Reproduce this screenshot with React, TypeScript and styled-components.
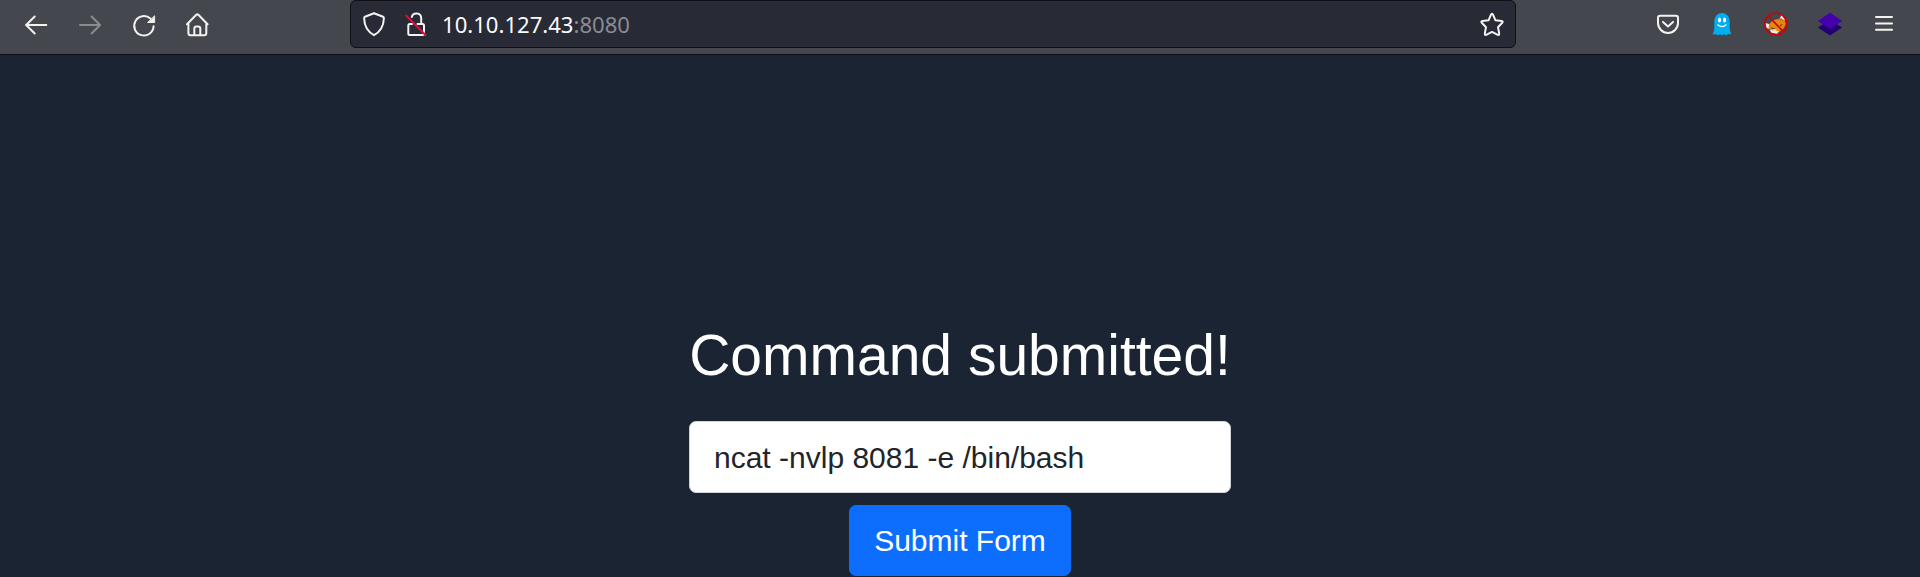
import React from "react";
import styled, { createGlobalStyle } from "styled-components";

const GlobalStyle = createGlobalStyle`
  * { box-sizing: border-box; }
  html, body { margin: 0; padding: 0; background: #1b2432; }
  body { overflow: hidden; }
`;

const Window = styled.div`
  width: 100%;
  height: 577px;
  display: flex;
  flex-direction: column;
  overflow: hidden;
  background: #1b2432;
  font-family: "Liberation Sans", Arial, sans-serif;
`;

const Toolbar = styled.header`
  flex: none;
  height: 55px;
  display: flex;
  align-items: flex-start;
  justify-content: space-between;
  padding: 0 9px 0 9px;
  background: #45474e;
  border-bottom: 1px solid #0d0e13;
`;

const ButtonGroup = styled.nav`
  display: flex;
`;

const ToolButton = styled.button<{ $dim?: boolean }>`
  width: 54px;
  height: 50px;
  padding: 0;
  border: 0;
  background: none;
  display: flex;
  align-items: center;
  justify-content: center;
  color: ${(p) => (p.$dim ? "#8b8c8f" : "#f3f3ee")};
`;

const Icon = styled.svg`
  width: 26px;
  height: 26px;
  flex: none;
  display: block;
  fill: none;
  stroke: currentColor;
  stroke-width: 2;
  stroke-linecap: round;
  stroke-linejoin: round;
`;

const AddressBar = styled.div`
  width: 1166px;
  height: 48px;
  margin-left: 125px;
  margin-right: auto;
  display: flex;
  align-items: center;
  padding: 0 10px 0 10px;
  color: #f3f3f3;
  background: #282a35;
  border: 1px solid #0f1016;
  border-radius: 6px;
`;

const SecurityIcons = styled.div`
  display: flex;
  gap: 16px;
  margin-right: 13px;
`;

const Url = styled.div`
  flex: 1;
  font: 22.1px/30px "Noto Sans", sans-serif;
  color: #fbfbfe;
`;

const Port = styled.span`
  color: #8b8b93;
`;

const Page = styled.main`
  flex: 1;
  display: flex;
  flex-direction: column;
  align-items: center;
  padding-top: 266px;
`;

const Title = styled.h1`
  margin: 0 0 32px;
  font-size: 57px;
  font-weight: 400;
  line-height: 68px;
  color: #fff;
  white-space: nowrap;
`;

const Form = styled.form`
  display: flex;
  flex-direction: column;
  align-items: center;
  gap: 12px;
`;

const CommandInput = styled.input`
  width: 542px;
  height: 72px;
  padding: 13px 24px 11px;
  border: 1px solid #ced4da;
  border-radius: 7px;
  background: #fff;
  color: #212529;
  font: 30px/45px "Liberation Sans", Arial, sans-serif;
  outline: none;
`;

const SubmitButton = styled.button`
  width: 222px;
  height: 71px;
  padding: 0;
  border: 1px solid #0d6efd;
  border-radius: 7px;
  background: #0d6efd;
  color: #fff;
  font: 30px/45px "Liberation Sans", Arial, sans-serif;
`;

const BackIcon = () => (
  <Icon viewBox="23 12 26 26"><path d="M26 25H46.3M34.7 16.5 26.2 25l8.5 8.5" /></Icon>
);
const ForwardIcon = () => (
  <Icon viewBox="77 12 26 26"><path d="M80 25h20M91.6 16.5l8.5 8.5-8.5 8.5" /></Icon>
);
const ReloadIcon = () => (
  <Icon viewBox="131 12 26 26">
    <path d="M153.6 26.3A9.7 9.7 0 1 1 150.4 18.6" />
    <path d="M154.6 16.2V22.5H148Z" fill="currentColor" strokeWidth="1" />
  </Icon>
);
const HomeIcon = () => (
  <Icon viewBox="185 12 26 26">
    <path d="M187 24.3 196 15Q197.3 13.7 198.6 15L207.6 24.3M188.4 23.5V33.2Q188.4 35.2 190.4 35.2H204.3Q206.3 35.2 206.3 33.2V23.5M194.3 35V28.6Q194.3 26.5 196.4 26.5H198.2Q200.3 26.5 200.3 28.6V35" />
  </Icon>
);
const ShieldIcon = () => (
  <Icon viewBox="361 11 26 26">
    <path d="M374 13.2 383 16.8Q384 17.2 383.9 18.3C383.6 26 381 31.5 374 35.2C367 31.5 364.4 26 364.1 18.3Q364 17.2 365 16.8Z" />
  </Icon>
);
const InsecureIcon = () => (
  <Icon viewBox="403 11 26 26">
    <path d="M411.8 17C412.8 12.3 421.2 12 421.2 18.5V24M417.5 24H422.5Q424 24 424 25.5V33.5Q424 35 422.5 35H409.8Q408.3 35 408.3 33.5V25.5Q408.3 24 409.8 24H412" />
    <path d="M406.2 15.6 425.5 35" stroke="#e80c3f" />
  </Icon>
);
const StarIcon = () => (
  <Icon viewBox="1479 11 26 26">
    <path d="M1490.9 14.8Q1492 12.8 1493.1 14.8L1495.5 20.3 1501.5 21Q1503.5 21.4 1502.2 22.8L1498 27.3 1499.2 33.4Q1499.3 35.6 1497.3 34.7L1492 31.9 1486.7 34.7Q1484.7 35.6 1484.8 33.4L1486 27.3 1481.8 22.8Q1480.5 21.4 1482.5 21L1488.5 20.3Z" />
  </Icon>
);
const PocketIcon = () => (
  <Icon viewBox="1655 12 26 26">
    <path d="M1660 15.8H1676Q1678 15.8 1678 17.8V23A10 10 0 0 1 1658 23V17.8Q1658 15.8 1660 15.8ZM1663 21.9 1668 26.4 1673 21.9" />
  </Icon>
);
const Smile = styled.path`
  stroke: #fff;
  stroke-width: 1.4;
`;
const GhostIcon = () => (
  <Icon viewBox="1709 12 26 26">
    <path stroke="none" fill="#00aef0" d="M1714.3 22C1714.3 10 1729.7 10 1729.7 22V28Q1729.8 31.5 1731.4 34.4Q1729.5 33.8 1728 34.2Q1726.8 34.5 1725.8 35.2L1723.8 34.3 1722 35.5 1720.1 34.3 1718 35.2Q1716.5 34.1 1712.5 34.4Q1714.2 31.5 1714.3 28Z" />
    <g stroke="none" fill="#fff">
      <ellipse cx="1719.5" cy="20" rx="1.6" ry="2.5" />
      <ellipse cx="1724.5" cy="20" rx="1.6" ry="2.5" />
    </g>
    <Smile d="M1718 25Q1722 28.2 1726 25" />
  </Icon>
);
const ProhibitionRing = styled.g`
  stroke: #c80508;
  stroke-width: 1.7;
`;
const NoFoxIcon = () => (
  <Icon viewBox="1763 12 26 26">
    <g stroke="none">
      <path fill="#f1ebe5" d="M1765.2 23 1770 24.2 1769.5 29 1766.5 28ZM1779 20 1781.5 15 1785.5 20ZM1769.5 29.5 1780 30.5 1777 33.7 1771.5 32.7Z" />
      <path fill="#e88410" d="M1769 24.5 1772.5 20.5 1779 18.8 1784.5 19.6 1785.8 24 1784 28 1780.5 31 1773 31 1768.6 28.5Z" />
      <path fill="#c66a10" d="M1778.5 20 1781 18 1783 20.5Z" />
      <path fill="#654321" d="M1770.5 27.4 1775.5 28.2 1772 29.4ZM1779.5 25 1782.5 24 1781 26.5Z" />
      <path fill="#f1ebe5" d="M1771 29.6 1777 29.4 1775 31.8Z" />
    </g>
    <ProhibitionRing>
      <circle cx="1775.8" cy="24" r="11" />
      <path d="M1768.2 16.2 1783.6 31.8" />
    </ProhibitionRing>
  </Icon>
);
const LayersIcon = () => (
  <Icon viewBox="1817 12 26 26">
    <path stroke="none" fill="#21006f" d="M1818 27.6 1824 23.7H1836L1842 27.6 1830 35.4Z" />
    <path stroke="none" fill="#4600ad" d="M1830 12.8 1842.2 20.9 1830 29 1817.8 20.9Z" />
  </Icon>
);
const MenuIcon = () => (
  <Icon viewBox="1871 12 26 26"><path d="M1876 17H1892M1876 23.5H1892M1876 29.7H1892" /></Icon>
);

export default function App() {
  return (
    <Window>
      <GlobalStyle />
      <Toolbar>
        <ButtonGroup>
          <ToolButton aria-label="Back"><BackIcon /></ToolButton>
          <ToolButton aria-label="Forward" $dim><ForwardIcon /></ToolButton>
          <ToolButton aria-label="Reload"><ReloadIcon /></ToolButton>
          <ToolButton aria-label="Home"><HomeIcon /></ToolButton>
        </ButtonGroup>
        <AddressBar>
          <SecurityIcons>
            <ShieldIcon />
            <InsecureIcon />
          </SecurityIcons>
          <Url>10.10.127.43<Port>:8080</Port></Url>
          <StarIcon />
        </AddressBar>
        <ButtonGroup>
          <ToolButton aria-label="Pocket"><PocketIcon /></ToolButton>
          <ToolButton aria-label="Privacy"><GhostIcon /></ToolButton>
          <ToolButton aria-label="Proxy off"><NoFoxIcon /></ToolButton>
          <ToolButton aria-label="Layers"><LayersIcon /></ToolButton>
          <ToolButton aria-label="Menu"><MenuIcon /></ToolButton>
        </ButtonGroup>
      </Toolbar>
      <Page>
        <Title>Command submitted!</Title>
        <Form>
          <CommandInput aria-label="Command" defaultValue="ncat -nvlp 8081 -e /bin/bash" />
          <SubmitButton type="button">Submit Form</SubmitButton>
        </Form>
      </Page>
    </Window>
  );
}
